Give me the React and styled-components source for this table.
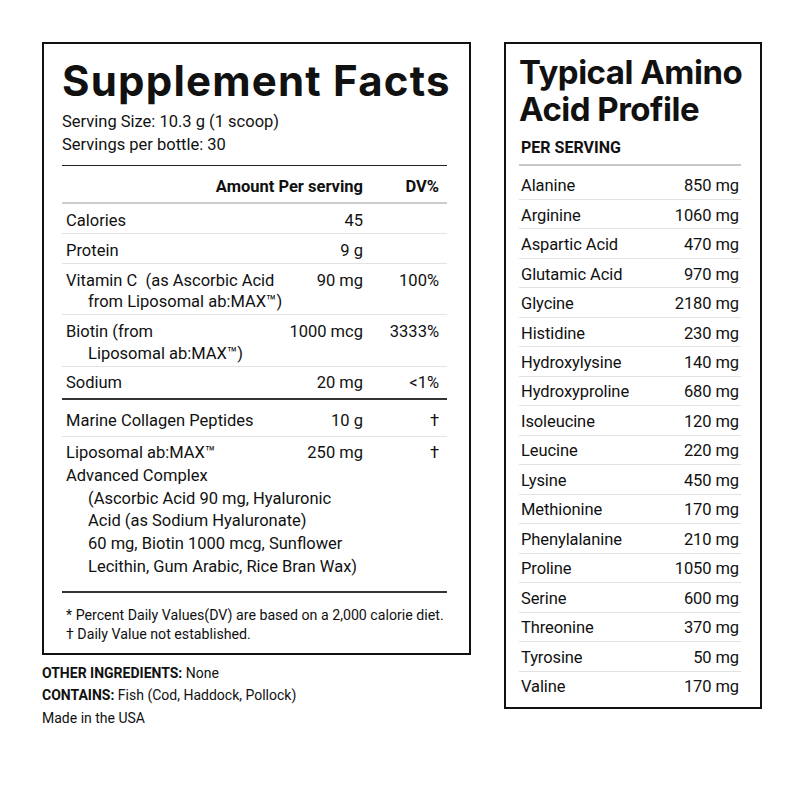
import React from 'react';
import styled, { createGlobalStyle } from 'styled-components';

const Global = createGlobalStyle`
  body {
    margin: 0;
    background: #fff;
    color: #111;
    font-family: Roboto, "Liberation Sans", sans-serif;
  }
`;

const Page = styled.div`
  width: 800px;
  height: 800px;
  display: flex;
  align-items: flex-start;
  gap: 33px;
  padding: 42px 0 0 42px;
  box-sizing: border-box;
`;

const LeftCol = styled.div`
  width: 429px;
  display: flex;
  flex-direction: column;
`;

const Box = styled.div`
  width: ${p => p.$w}px;
  border: 2px solid #111;
  box-sizing: border-box;
  padding: ${p => p.$pad};
`;

const BigTitle = styled.h1`
  margin: 0;
  font-family: Inter, "Liberation Sans", sans-serif;
  font-weight: 700;
  font-size: ${p => p.$size}px;
  line-height: ${p => p.$lh}px;
  letter-spacing: ${p => p.$ls}px;
  color: #111;
  white-space: nowrap;
`;

const Meta = styled.div`
  font-size: 16.5px;
  line-height: 22.7px;
  &:first-of-type { margin-top: 4px; }
`;

const Table = styled.div`
  margin-top: 9px;
  border-top: 1.5px solid #222;
`;

const Row = styled.div`
  display: grid;
  grid-template-columns: 1fr 78px 76px;
  padding: ${p => p.$pad || '6px 8px 1.5px 4px'};
  border-bottom: ${p => p.$line || '1px solid #e3e3e3'};
  font-size: 16.5px;
  line-height: ${p => p.$lh || 21.5}px;
  font-weight: ${p => (p.$bold ? 700 : 400)};
`;

const HeadLabel = styled.div`
  grid-column: 1 / 3;
  text-align: right;
`;

const Name = styled.div`
  white-space: nowrap;
`;

const Indent = styled.div`
  padding-left: 22px;
`;

const Detail = styled.div`
  grid-column: 1 / -1;
  padding-left: 22px;
`;

const Num = styled.div`
  text-align: right;
  white-space: nowrap;
`;

const Foot = styled.div`
  padding: 13px 0 8px 4px;
  font-size: 14.2px;
  line-height: 19.3px;
`;

const Below = styled.div`
  padding-top: 7px;
  font-size: 14px;
  line-height: 22.7px;
  b { font-weight: 700; }
`;

const Sub = styled.div`
  margin: 11px 0 5px;
  padding: 0 0 5.5px 2px;
  border-bottom: 2px solid #c8c8c8;
  font-size: 16px;
  line-height: 20px;
  font-weight: 700;
`;

const AminoRow = styled.div`
  display: flex;
  justify-content: space-between;
  padding: 4.6px 2px 2.4px 2px;
  border-bottom: ${p => (p.$last ? 'none' : '1px solid #e3e3e3')};
  font-size: 16.5px;
  line-height: 21.5px;
  letter-spacing: -0.1px;
`;

const amino = [
  ['Alanine', '850 mg'],
  ['Arginine', '1060 mg'],
  ['Aspartic Acid', '470 mg'],
  ['Glutamic Acid', '970 mg'],
  ['Glycine', '2180 mg'],
  ['Histidine', '230 mg'],
  ['Hydroxylysine', '140 mg'],
  ['Hydroxyproline', '680 mg'],
  ['Isoleucine', '120 mg'],
  ['Leucine', '220 mg'],
  ['Lysine', '450 mg'],
  ['Methionine', '170 mg'],
  ['Phenylalanine', '210 mg'],
  ['Proline', '1050 mg'],
  ['Serine', '600 mg'],
  ['Threonine', '370 mg'],
  ['Tyrosine', '50 mg'],
  ['Valine', '170 mg'],
];

const App = () => {
  const aminoRows = amino.map(([n, v], i) => (
    <AminoRow key={n} $last={i === amino.length - 1}>
      <span>{n}</span>
      <span>{v}</span>
    </AminoRow>
  ));

  return (
    <Page>
      <Global />
      <LeftCol>
        <Box $w={429} $pad="11px 22px 0 18px">
          <BigTitle $size={42} $lh={52} $ls={1.2}>Supplement Facts</BigTitle>
          <Meta>Serving Size: 10.3 g (1 scoop)</Meta>
          <Meta>Servings per bottle: 30</Meta>
          <Table>
            <Row $bold $pad="10px 8px 4px 4px" $line="2px solid #cdcdcd">
              <HeadLabel>Amount Per serving</HeadLabel>
              <Num>DV%</Num>
            </Row>
            <Row><Name>Calories</Name><Num>45</Num><Num /></Row>
            <Row><Name>Protein</Name><Num>9 g</Num><Num /></Row>
            <Row>
              <Name>Vitamin C&nbsp; (as Ascorbic Acid<Indent>from Liposomal ab:MAX™)</Indent></Name>
              <Num>90 mg</Num><Num>100%</Num>
            </Row>
            <Row>
              <Name>Biotin (from<Indent>Liposomal ab:MAX™)</Indent></Name>
              <Num>1000 mcg</Num><Num>3333%</Num>
            </Row>
            <Row $pad="5px 8px 5px 4px" $line="2px solid #333">
              <Name>Sodium</Name><Num>20 mg</Num><Num>&lt;1%</Num>
            </Row>
            <Row $pad="10px 8px 4px 4px">
              <Name>Marine Collagen Peptides</Name><Num>10 g</Num><Num>†</Num>
            </Row>
            <Row $pad="5px 8px 12.5px 4px" $line="2px solid #333" $lh={22.8}>
              <Name>Liposomal ab:MAX™<br />Advanced Complex</Name>
              <Num>250 mg</Num><Num>†</Num>
              <Detail>
                (Ascorbic Acid 90 mg, Hyaluronic<br />
                Acid (as Sodium Hyaluronate)<br />
                60 mg, Biotin 1000 mcg, Sunflower<br />
                Lecithin, Gum Arabic, Rice Bran Wax)
              </Detail>
            </Row>
          </Table>
          <Foot>
            * Percent Daily Values(DV) are based on a 2,000 calorie diet.<br />
            † Daily Value not established.
          </Foot>
        </Box>
        <Below>
          <div><b>OTHER INGREDIENTS:</b> None</div>
          <div><b>CONTAINS:</b> Fish (Cod, Haddock, Pollock)</div>
          <div>Made in the USA</div>
        </Below>
      </LeftCol>
      <Box $w={258} $pad="10px 19px 7px 13px">
        <BigTitle $size={33} $lh={36.5} $ls={-0.5}>Typical Amino<br />Acid Profile</BigTitle>
        <Sub>PER SERVING</Sub>
        {aminoRows}
      </Box>
    </Page>
  );
};

export default App;
